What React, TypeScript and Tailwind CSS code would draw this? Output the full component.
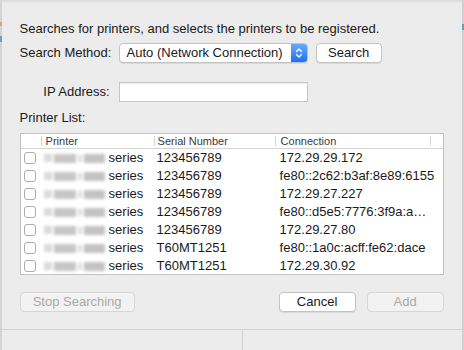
import React from 'react'

type Row = { serial: string; conn: string }

const rows: Row[] = [
  { serial: '123456789', conn: '172.29.29.172' },
  { serial: '123456789', conn: 'fe80::2c62:b3af:8e89:6155' },
  { serial: '123456789', conn: '172.29.27.227' },
  { serial: '123456789', conn: 'fe80::d5e5:7776:3f9a:a…' },
  { serial: '123456789', conn: '172.29.27.80' },
  { serial: 'T60MT1251', conn: 'fe80::1a0c:acff:fe62:dace' },
  { serial: 'T60MT1251', conn: '172.29.30.92' },
]

function Chevrons() {
  return (
    <svg width="8" height="12" viewBox="0 0 8 12" fill="none" stroke="white" strokeWidth="1.4" strokeLinecap="round" strokeLinejoin="round">
      <path d="M1.5 4.5 L4 2 L6.5 4.5" />
      <path d="M1.5 7.5 L4 10 L6.5 7.5" />
    </svg>
  )
}

function MacButton({ label, disabled, width }: { label: string; disabled?: boolean; width: string }) {
  return (
    <div
      className={`${width} h-[20px] flex items-center justify-center rounded-[4px] border text-[13px] ${
        disabled
          ? 'bg-[#f2f2f2] border-[#d6d6d6] text-[#a9a9a9]'
          : 'bg-white border-[#c3c3c3] text-[#1a1a1a] shadow-[0_1px_0_rgba(0,0,0,0.08)]'
      }`}
    >
      {label}
    </div>
  )
}

export default function App() {
  return (
    <div className="w-[464px] h-[350px] bg-[#ececec] flex overflow-hidden font-['Helvetica_Neue','Liberation_Sans',Arial,sans-serif] text-[13px] text-[#1a1a1a]">
      <div className="w-[2px] h-full bg-[#d4d4d4] flex flex-col">
        <div className="h-[22px]" />
        <div className="h-[4px] bg-[#d9a07a]" />
        <div className="h-[10px]" />
        <div className="h-[6px] bg-[#6b9cc4]" />
      </div>

      <div className="flex-1 flex flex-col">
        <div className="h-[3px] bg-gradient-to-b from-[#dadada] to-[#e8e8e8]" />
        <div className="flex-1 flex flex-col pl-[18px] pr-[18px]">
          <div className="mt-[18px] h-[16px] leading-[16px] whitespace-nowrap">
            Searches for printers, and selects the printers to be registered.
          </div>

          <div className="mt-[6px] h-[20px] flex items-center">
            <div className="w-[91px] text-right pr-[2px] leading-[20px] whitespace-nowrap">Search Method:</div>
            <div className="ml-[8px] w-[189px] h-[20px] flex rounded-[4px] border border-[#c2c2c2] bg-white shadow-[0_1px_0_rgba(0,0,0,0.08)] overflow-hidden">
              <div className="flex-1 pl-[7px] leading-[18px] whitespace-nowrap">Auto (Network Connection)</div>
              <div className="w-[16px] h-full bg-gradient-to-b from-[#68aafc] to-[#1b6ff1] flex items-center justify-center">
                <Chevrons />
              </div>
            </div>
            <div className="ml-[8px]">
              <MacButton label="Search" width="w-[66px]" />
            </div>
          </div>

          <div className="mt-[19px] h-[20px] flex items-center">
            <div className="w-[91px] text-right pr-[1px] leading-[20px] whitespace-nowrap">IP Address:</div>
            <div className="ml-[8px] w-[189px] h-[20px] bg-white border border-[#c6c6c6] shadow-[inset_0_1px_0_rgba(0,0,0,0.06)]" />
          </div>

          <div className="mt-[8px] h-[16px] leading-[16px]">Printer List:</div>

          <div className="mt-[7px] w-[424px] h-[142px] bg-white border border-[#c3c3c3] flex flex-col">
            <div className="h-[15px] border-b border-[#d4d4d4] grid grid-cols-[21px_113px_121px_155px_1fr] text-[11px] text-[#3a3a3a] leading-[14px]">
              <div className="flex justify-end items-center"><div className="w-px h-[10px] bg-[#d6d6d6]" /></div>
              <div className="flex items-center">
                <span className="flex-1 pl-[4px]">Printer</span>
                <div className="w-px h-[10px] bg-[#d6d6d6]" />
              </div>
              <div className="flex items-center">
                <span className="flex-1 pl-[3px]">Serial Number</span>
                <div className="w-px h-[10px] bg-[#d6d6d6]" />
              </div>
              <div className="flex items-center">
                <span className="flex-1 pl-[5px]">Connection</span>
                <div className="w-px h-[10px] bg-[#d6d6d6]" />
              </div>
              <div />
            </div>
            {rows.map((r, i) => (
              <div key={i} className="h-[18px] grid grid-cols-[21px_113px_121px_155px_1fr] items-center leading-[18px]">
                <div className="pl-[3px] flex items-center">
                  <div className="w-[12px] h-[12px] rounded-[3px] border border-[#acacac] bg-white" />
                </div>
                <div className="pl-[2px] flex items-center">
                  <div className="w-[61px] h-[11px] flex items-center gap-[2px] blur-[1.5px]">
                    <div className="w-[9px] h-[8px] bg-[#dadada]" />
                    <div className="w-[22px] h-[9px] bg-[#c6c6c6]" />
                    <div className="w-[5px] h-[7px] bg-[#dedede]" />
                    <div className="w-[21px] h-[9px] bg-[#c3c3c3]" />
                  </div>
                  <span className="ml-[4px]">series</span>
                </div>
                <div className="pl-[2px]">{r.serial}</div>
                <div className="pl-[4px] whitespace-nowrap">{r.conn}</div>
                <div />
              </div>
            ))}
          </div>

          <div className="mt-[17px] flex items-center">
            <MacButton label="Stop Searching" disabled width="w-[115px]" />
            <div className="flex-1" />
            <MacButton label="Cancel" width="w-[77px]" />
            <div className="ml-[11px]">
              <MacButton label="Add" disabled width="w-[77px]" />
            </div>
          </div>
        </div>

        <div className="h-[21px] border-t border-[#d2d2d2] flex">
          <div className="w-[241px] border-r border-[#d2d2d2]" />
        </div>
      </div>

      <div className="w-[3px] h-full bg-[#d0d0d0] flex flex-col">
        <div className="h-[24px]" />
        <div className="h-[6px] bg-[#6b9cc4]" />
      </div>
    </div>
  )
}
